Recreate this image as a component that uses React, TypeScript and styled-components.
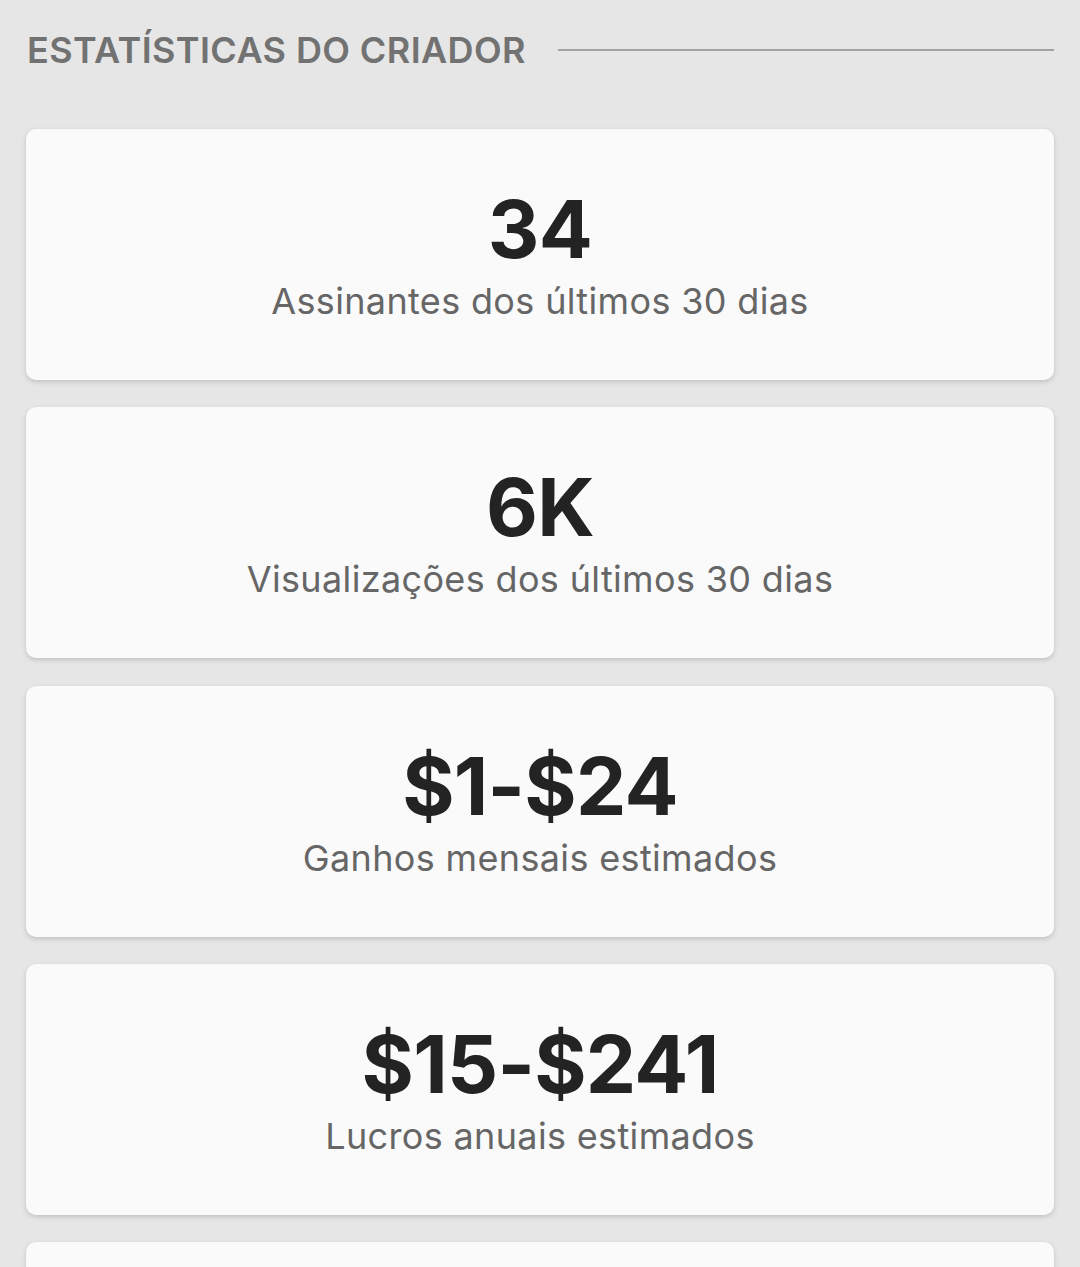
import React from "react";
import styled, { createGlobalStyle } from "styled-components";

const Global = createGlobalStyle`
  html, body { margin: 0; padding: 0; background: #e6e6e6; }
  body { font-family: Inter, "Noto Sans", sans-serif; }
`;

const Page = styled.div`
  padding: 28px 26px 0 26px;
  display: flex;
  flex-direction: column;
  height: 1267px;
  overflow: hidden;
  box-sizing: border-box;
`;

const Header = styled.div`
  display: flex;
  align-items: center;
  gap: 32px;
  padding-left: 1px;
  margin-bottom: 57px;
`;

const Title = styled.h2`
  margin: 0;
  font-family: Inter, "Liberation Sans", sans-serif;
  font-weight: 600;
  font-size: 36px;
  line-height: 44px;
  color: #727272;
  white-space: nowrap;
  letter-spacing: 0.4px;
`;

const Rule = styled.div`
  flex: 1;
  height: 2px;
  background: #a2a2a2;
`;

const List = styled.div`
  display: flex;
  flex-direction: column;
  gap: 27.33px;
`;

const Card = styled.div`
  height: 251px;
  box-sizing: border-box;
  background: #fafafa;
  border-radius: 10px;
  box-shadow: 0 2px 5px rgba(0, 0, 0, 0.16);
  display: flex;
  flex-direction: column;
  align-items: center;
  padding-top: 55px;
  flex-shrink: 0;
`;

const Value = styled.div`
  font-family: Inter, sans-serif;
  font-weight: 700;
  font-size: 80px;
  line-height: 90px;
  color: #232323;
  letter-spacing: -0.7px;
`;

const Label = styled.div`
  font-family: Inter, sans-serif;
  font-weight: 400;
  font-size: 36px;
  line-height: 55px;
  color: #666666;
  letter-spacing: 0.35px;
`;

const stats = [
  { value: "34", label: "Assinantes dos últimos 30 dias" },
  { value: "6K", label: "Visualizações dos últimos 30 dias" },
  { value: "$1-$24", label: "Ganhos mensais estimados" },
  { value: "$15-$241", label: "Lucros anuais estimados" },
];

export default function App() {
  return (
    <>
      <Global />
      <Page>
        <Header>
          <Title>ESTATÍSTICAS DO CRIADOR</Title>
          <Rule />
        </Header>
        <List>
          {stats.map((s) => (
            <Card key={s.value}>
              <Value>{s.value}</Value>
              <Label>{s.label}</Label>
            </Card>
          ))}
          <Card />
        </List>
      </Page>
    </>
  );
}
